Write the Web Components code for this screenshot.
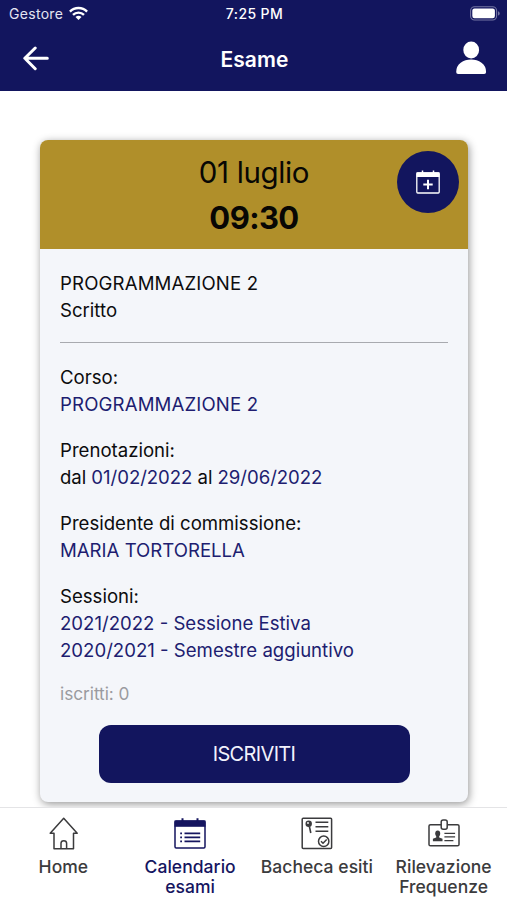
<!DOCTYPE html>
<html lang="it">
<head>
<meta charset="utf-8">
<meta name="viewport" content="width=device-width, initial-scale=1">
<title>Esame</title>
<style>
    :root{
        --theme-color: #12155e;
        --accent-color: #b08f2a;
        --card-color: #f4f6fa;
        --link-color: #201d70;
    }

    body{
        margin: 0;
        height: 900px;
        overflow: hidden;
        background-color: #fff;
        font-family: Inter, "Liberation Sans", sans-serif;
        color: #0c0c0e;
        display: flex;
        flex-direction: column;
    }
</style>
</head>
<body>
    <status-bar carrier="Gestore" time="7:25 PM"></status-bar>
    <page-header>Esame</page-header>
    <exam-card day="01 luglio" time="09:30">
        <exam-detail><span style="letter-spacing: 0.15px">PROGRAMMAZIONE 2</span><span>Scritto</span></exam-detail>
        <card-divider></card-divider>
        <exam-detail label="Corso:"><exam-value style="letter-spacing: 0.15px">PROGRAMMAZIONE 2</exam-value></exam-detail>
        <exam-detail label="Prenotazioni:"><span style="letter-spacing: -0.05px">dal <exam-value inline>01/02/2022</exam-value> al <exam-value inline>29/06/2022</exam-value></span></exam-detail>
        <exam-detail label="Presidente di commissione:"><exam-value>MARIA TORTORELLA</exam-value></exam-detail>
        <exam-detail label="Sessioni:"><exam-value>2021/2022 - Sessione Estiva</exam-value><exam-value>2020/2021 - Semestre aggiuntivo</exam-value></exam-detail>
        <span slot="count">iscritti: 0</span>
        <span slot="action">ISCRIVITI</span>
    </exam-card>
    <tab-bar>
        <tab-item icon="home">Home</tab-item>
        <tab-item icon="calendar" active>Calendario<br>esami</tab-item>
        <tab-item icon="board">Bacheca esiti</tab-item>
        <tab-item icon="badge">Rilevazione<br>Frequenze</tab-item>
    </tab-bar>

<script>
const ICONS = {
    home: `
        <path d="M3.200 17.300 16.700 2.300l13.500 15h-3.700v15.400H7V17.300z"/>
        <path d="M14 32.700v-5.400q0-2.600 2.800-2.600t2.800 2.600v5.400"/>`,
    calendar: `
        <rect x="1" y="5" width="30" height="27" rx="1.2"/>
        <path d="M.5 4.5h31v6.3H.5z" fill="currentColor" stroke="none"/>
        <path d="M8.5 2.3v4M23.5 2.3v4" stroke-width="2"/>
        <path d="M10.5 17.3h15.7M10.5 21.3h15.7M10.5 25.3h15.7" stroke-width="1.8"/>
        <path d="M6.2 17.3H8M6.2 21.3H8M6.2 25.3H8" stroke-width="1.8"/>`,
    board: `
        <rect x="1.2" y="2.2" width="29.4" height="30.3" rx="1"/>
        <circle cx="7.7" cy="7.7" r="3.2" fill="currentColor" stroke="none"/>
        <circle cx="7" cy="7" r=".9" fill="#fff" stroke="none"/>
        <path d="M8.4 10.5 9.8 17" stroke-width="1.6"/>
        <path d="M14.5 6.2h12.8M14.5 10.7h12.8M14.5 15.2h12.8"/>
        <circle cx="22.7" cy="25.3" r="5.2"/>
        <path d="m20 25.2 2 2 3.7-3.7"/>`,
    badge: `
        <path d="M13 8.7H2.500Q1 8.700 1 10v18.500q0 1.300 1.500 1.300h27q1.500 0 1.500-1.300V10q0-1.300-1.500-1.300H19.200"/>
        <rect x="13.2" y="4" width="6" height="9.2" rx="2"/>
        <ellipse cx="9.7" cy="17.4" rx="2.5" ry="2.900" fill="currentColor" stroke="none"/>
        <path d="M8.200 18.500h3v3.100l3.300 1.200v2.400H4.900v-2.400l3.300-1.200z" fill="currentColor" stroke="none"/>
        <path d="M16.4 17.3h10.7M16.4 20.8h10.7M16.4 24.7h9" stroke-width="1.300"/>`
};

class StatusBar extends HTMLElement {

    constructor(){
        super();

        this.attachShadow({mode: 'open'});
        this.shadowRoot.innerHTML = getStatusBarTemplate(this.getAttribute("carrier"), this.getAttribute("time"));
    }

}

function getStatusBarTemplate(carrier, time){
    return `
        <style>
            :host{
                display: grid;
                grid-template-columns: 1fr auto 1fr;
                align-items: center;
                height: 27px;
                padding: 0 7px 0 9px;
                background-color: var(--theme-color);
                color: #fff;
                font-size: 14px;
            }

            .Carrier{
                display: flex;
                align-items: center;
                gap: 5.5px;
                letter-spacing: 0.3px;
                color: #e4e4f2;
            }

            .Time{
                font-size: 14px;
                font-weight: 500;
                letter-spacing: 0.4px;
            }

            .Battery{
                justify-self: end;
                display: block;
            }
        </style>

        <div class="Carrier">
            <span>${carrier}</span>
            <svg width="19" height="15" viewBox="0 0 19 15" fill="none" stroke="#fff" stroke-width="2.4">
                <path d="M.9 5.6a12.2 12.2 0 0 1 17.2 0"/>
                <path d="M4 8.9a7.8 7.8 0 0 1 11 0"/>
                <path d="M9.5 14 6.5 11.1a4.3 4.3 0 0 1 6 0z" fill="#fff" stroke="none"/>
            </svg>
        </div>
        <div class="Time">${time}</div>
        <svg class="Battery" width="30" height="15" viewBox="0 0 30 15">
            <rect x=".6" y=".8" width="26" height="13.2" rx="4" fill="none" stroke="#7476a3" stroke-width="1.1"/>
            <rect x="2.3" y="2.5" width="22.6" height="9.8" rx="2.2" fill="#fff"/>
            <path d="M28 5.2q1.7.5 1.7 2.2T28 9.6z" fill="#7476a3"/>
        </svg>
    `;
}

class PageHeader extends HTMLElement {

    constructor(){
        super();

        this.attachShadow({mode: 'open'});
        this.shadowRoot.innerHTML = getPageHeaderTemplate();
    }

}

function getPageHeaderTemplate(){
    return `
        <style>
            :host{
                display: grid;
                grid-template-columns: 1fr auto 1fr;
                align-items: center;
                box-sizing: border-box;
                height: 64px;
                padding: 0 20px 0 22px;
                background-color: var(--theme-color);
                color: #fff;
            }

            h1{
                margin: 0;
                font-size: 21px;
                font-weight: 600;
                letter-spacing: 0.1px;
            }

            svg{
                display: block;
            }

            .Profile{
                justify-self: end;
                margin-bottom: 2px;
            }
        </style>

        <svg width="28" height="26" viewBox="0 0 28 26" fill="none" stroke="#fff" stroke-width="3" stroke-linecap="round" stroke-linejoin="round">
            <path d="M25.3 12.3H3M13.2 2 2.8 12.3l10.4 10.4"/>
        </svg>
        <h1><slot></slot></h1>
        <svg class="Profile" width="31" height="34" viewBox="0 0 31 34" fill="#fff">
            <ellipse cx="15.2" cy="9" rx="7.9" ry="8.4"/>
            <path d="M.2 31q0-6 4.500-9.300 4.500-3.100 10.400-3.100t10.400 3.100Q30.100 25 30.100 31q0 2-2 2h-26q-1.900 0-1.900-2z"/>
        </svg>
    `;
}

class ExamCard extends HTMLElement {

    constructor(){
        super();

        this.attachShadow({mode: 'open'});
        this.shadowRoot.innerHTML = getExamCardTemplate(this.getAttribute("day"), this.getAttribute("time"));
    }

}

function getExamCardTemplate(day, time){
    return `
        <style>
            :host{
                display: block;
                box-sizing: border-box;
                position: relative;
                width: 428px;
                height: 662px;
                margin: 49px 0 0 40px;
                border-radius: 8px;
                background-color: var(--card-color);
                box-shadow: 1px 2px 8px rgba(0, 0, 0, 0.42);
                flex: none;
            }

            header{
                box-sizing: border-box;
                height: 108.5px;
                padding-top: 10px;
                border-radius: 8px 8px 0 0;
                background-color: var(--accent-color);
                color: #080704;
                text-align: center;
            }

            .Day{
                font-size: 29.5px;
                line-height: 45px;
                letter-spacing: -0.35px;
            }

            .Time{
                font-size: 31px;
                line-height: 45px;
                font-weight: 700;
                letter-spacing: -0.6px;
            }

            /* floats over the coloured band */
            .Add{
                position: absolute;
                top: 11px;
                right: 9px;
                width: 62px;
                height: 62px;
                padding: 0;
                border: 0;
                border-radius: 50%;
                background-color: var(--theme-color);
                display: grid;
                place-items: center;
            }

            .Body{
                padding: 21px 20px 0;
                font-size: 18.6px;
                line-height: 27px;
            }

            .Count{
                margin-top: 17px;
                font-size: 17.3px;
                line-height: 26px;
                letter-spacing: -0.05px;
                color: #9a9b9f;
            }

            .Action{
                display: block;
                width: 311px;
                height: 58px;
                margin: 18.5px 0 0 38.5px;
                padding: 0;
                border: 0;
                border-radius: 12px;
                background-color: var(--theme-color);
                color: #f2f2fc;
                font: inherit;
                font-size: 20px;
                letter-spacing: -0.65px;
            }
        </style>

        <header>
            <div class="Day">${day}</div>
            <div class="Time">${time}</div>
        </header>
        <button class="Add" aria-label="Aggiungi al calendario">
            <svg width="24" height="24" viewBox="0 0 24 24" fill="none" stroke="#fff">
                <rect x=".8" y="3" width="22.4" height="20" rx="1" stroke-width="1.3"/>
                <path d="M.5 2.3h23V7H.5z" fill="#fff" stroke="none"/>
                <path d="M6.5.5v3M17.5.5v3" stroke-width="1.5"/>
                <path d="M12 9.8v9.4M7.3 14.5h9.4" stroke-width="2"/>
            </svg>
        </button>
        <div class="Body">
            <slot></slot>
            <div class="Count"><slot name="count"></slot></div>
            <button class="Action"><slot name="action"></slot></button>
        </div>
    `;
}

class ExamDetail extends HTMLElement {

    constructor(){
        super();

        this.attachShadow({mode: 'open'});
        this.shadowRoot.innerHTML = getExamDetailTemplate(this.getAttribute("label"));
    }

}

function getExamDetailTemplate(label){
    return `
        <style>
            :host{
                display: flex;
                flex-direction: column;
            }

            :host([label]){
                margin-bottom: 19px;
            }

            :host([label]:last-of-type){
                margin-bottom: 0;
            }
        </style>

        ${label ? `<div>${label}</div>` : ""}
        <slot></slot>
    `;
}

class ExamValue extends HTMLElement {

    constructor(){
        super();

        this.attachShadow({mode: 'open'});
        this.shadowRoot.innerHTML = `
            <style>
                :host{
                    display: block;
                    color: var(--link-color);
                }

                :host([inline]){
                    display: inline;
                }
            </style>

            <slot></slot>
        `.replace(/>\s+/g, ">").replace(/\s+</g, "<");
    }

}

class CardDivider extends HTMLElement {

    constructor(){
        super();

        this.attachShadow({mode: 'open'});
        this.shadowRoot.innerHTML = `
            <style>
                :host{
                    display: block;
                    height: 1.5px;
                    margin: 18px 0 20.5px;
                    background-color: #a8aaaf;
                }
            </style>
        `;
    }

}

class TabBar extends HTMLElement {

    constructor(){
        super();

        this.attachShadow({mode: 'open'});
        this.shadowRoot.innerHTML = `
            <style>
                :host{
                    display: grid;
                    grid-template-columns: repeat(4, 1fr);
                    box-sizing: border-box;
                    height: 93px;
                    margin-top: 5px;
                    border-top: 1px solid #e4e4e6;
                    background-color: #fff;
                    position: relative;
                }
            </style>

            <slot></slot>
        `;
    }

}

class TabItem extends HTMLElement {

    constructor(){
        super();

        this.attachShadow({mode: 'open'});
        this.shadowRoot.innerHTML = getTabItemTemplate(this.getAttribute("icon"));
    }

}

function getTabItemTemplate(icon){
    return `
        <style>
            :host{
                display: flex;
                flex-direction: column;
                align-items: center;
                padding-top: 8px;
                color: #3b3b3d;
                font-size: 17.5px;
                font-weight: 500;
                line-height: 19.5px;
                letter-spacing: 0.05px;
                text-align: center;
                white-space: nowrap;
            }

            :host([active]){
                color: #15155f;
            }

            svg{
                display: block;
                flex: none;
                margin-bottom: 7px;
            }
        </style>

        <svg width="32" height="34" viewBox="0 0 32 34" fill="none" stroke="currentColor" stroke-width="1.5" stroke-linejoin="round">${ICONS[icon]}</svg>
        <div><slot></slot></div>
    `;
}

window.customElements.define('status-bar', StatusBar);
window.customElements.define('page-header', PageHeader);
window.customElements.define('exam-card', ExamCard);
window.customElements.define('exam-detail', ExamDetail);
window.customElements.define('exam-value', ExamValue);
window.customElements.define('card-divider', CardDivider);
window.customElements.define('tab-bar', TabBar);
window.customElements.define('tab-item', TabItem);
</script>
</body>
</html>
